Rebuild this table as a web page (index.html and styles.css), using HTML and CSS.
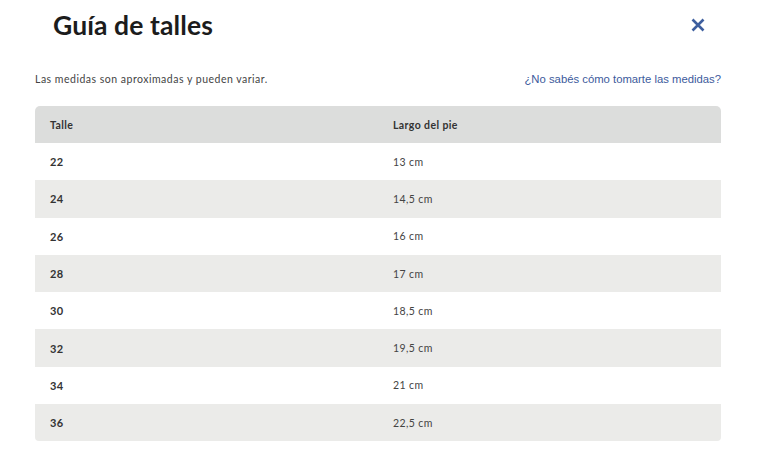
FILE: index.html
```html
<!DOCTYPE html>
<html lang="es">
<head>
<meta charset="utf-8">
<link rel="stylesheet" href="styles.css">
</head>
<body>
<div class="modal">
  <div class="head">
    <h1 class="title">Guía de talles</h1>
    <button class="close" aria-label="Cerrar">
      <svg width="14" height="14" viewBox="0 0 14 14"><path d="M1.5 1.5 L12.5 12.5 M12.5 1.5 L1.5 12.5" stroke="#3d5e9e" stroke-width="2.6" stroke-linecap="butt" fill="none"/></svg>
    </button>
  </div>
  <div class="info">
    <span class="note">Las medidas son aproximadas y pueden variar.</span>
    <a class="link" href="#">¿No sabés cómo tomarte las medidas?</a>
  </div>
  <table class="sizes">
    <thead>
      <tr><th>Talle</th><th>Largo del pie</th></tr>
    </thead>
    <tbody>
      <tr><td class="n">22</td><td>13 cm</td></tr>
      <tr><td class="n">24</td><td>14,5 cm</td></tr>
      <tr><td class="n">26</td><td>16 cm</td></tr>
      <tr><td class="n">28</td><td>17 cm</td></tr>
      <tr><td class="n">30</td><td>18,5 cm</td></tr>
      <tr><td class="n">32</td><td>19,5 cm</td></tr>
      <tr><td class="n">34</td><td>21 cm</td></tr>
      <tr><td class="n">36</td><td>22,5 cm</td></tr>
    </tbody>
  </table>
</div>
</body>
</html>
```
FILE: styles.css
```css
* { box-sizing: border-box; }
html, body { margin: 0; padding: 0; background: #fff; }
body { font-family: Lato, "Open Sans", sans-serif; color: #333; }
.modal { width: 761px; height: 450px; padding: 0 40px 0 35px; }
.head { display: flex; justify-content: space-between; align-items: center; height: 50px; padding: 0 16px 0 18px; }
.title { margin: 0; font-size: 26.5px; font-weight: 700; color: #1c1c1c; letter-spacing: 0.1px; }
.close { border: 0; background: none; padding: 0; width: 14px; height: 14px; display: flex; }
.info { display: flex; justify-content: space-between; align-items: center; height: 56px; padding-top: 2px; }
.note { font-size: 10.5px; color: #444; letter-spacing: 0.5px; }
.link { font-family: "Liberation Sans", Arial, sans-serif; font-size: 11.3px; color: #3c5a9c; text-decoration: none; }
.sizes { width: 686px; border-collapse: separate; border-spacing: 0; font-size: 10.5px; letter-spacing: 0.4px; }
.sizes th { text-align: left; font-weight: 700; color: #333; background: #dcdddc; height: 37px; padding: 0 15px; }
.sizes th:first-child { width: 343px; border-top-left-radius: 5px; }
.sizes th:last-child { border-top-right-radius: 5px; }
.sizes td { height: 37.3px; padding: 0 15px; color: #444; }
.sizes td.n { font-weight: 700; color: #333; font-size: 11px; }
.sizes tbody tr:nth-child(even) td { background: #ebebe9; }
.sizes tbody tr:last-child td:first-child { border-bottom-left-radius: 4px; }
.sizes tbody tr:last-child td:last-child { border-bottom-right-radius: 4px; }
```
